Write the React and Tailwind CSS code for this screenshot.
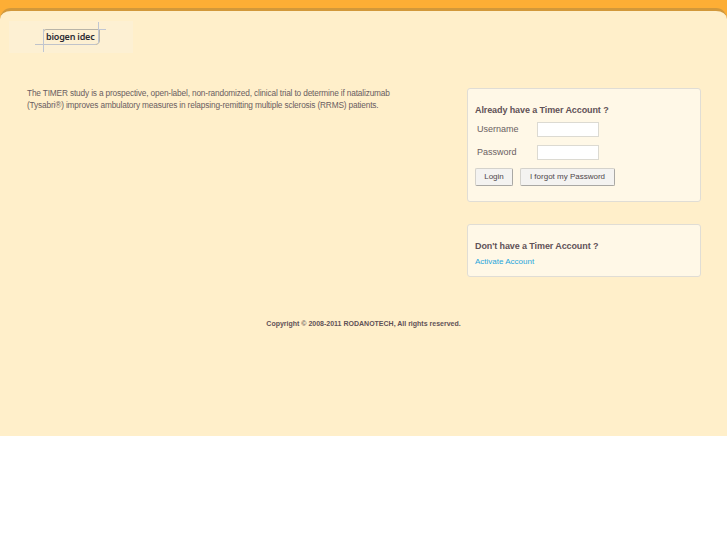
export default function App() {
  return (
    <div className="bg-white h-[545px] font-['Liberation_Sans',Arial,sans-serif] text-[#5f5257]">
      <div className="h-[436px] bg-[#fdae35] flex flex-col">
        <div className="h-[8px] shrink-0" />
        <div className="flex-1 rounded-t-[11px] bg-[#ffefca] border-t-[3px] border-[#d2983a] flex flex-col">
          <div className="ml-[9px] mt-[10px] w-[124px] h-[32px] bg-[#fdf0d3] relative shrink-0">
            <svg className="absolute left-0 top-0" width="124" height="32" viewBox="0 0 124 32" fill="none">
              <path d="M34.5 23.5 V11 Q34.5 8.5 37 8.5 H90.5 V19 Q90.5 23.5 86 23.5" stroke="#b8b4a8" strokeWidth="1" />
              <path d="M26 23.5 H87" stroke="#c0c3ca" strokeWidth="1" />
              <path d="M34.5 8 V31" stroke="#c0c6d2" strokeWidth="1" />
              <path d="M89 8.5 H97" stroke="#c0c6d2" strokeWidth="1" />
              <path d="M89.5 1 V22" stroke="#c0c6d2" strokeWidth="1" />
            </svg>
            <span className="absolute left-[37px] top-[9px] text-[9px] tracking-[-0.2px] leading-[13px] font-['Noto_Sans',sans-serif] font-semibold text-[#2b2b33] whitespace-nowrap">biogen idec</span>
          </div>
          <div className="flex justify-between mt-[35px] pl-[27px] pr-[26px] shrink-0">
            <p className="w-[372px] -mt-[1px] text-[8.3px] tracking-[-0.16px] leading-[12px] text-[#6a5d61]">
              The TIMER study is a prospective, open-label, non-randomized, clinical trial to determine if natalizumab (Tysabri®) improves ambulatory measures in relapsing-remitting multiple sclerosis (RRMS) patients.
            </p>
            <div className="w-[234px] flex flex-col gap-[22px]">
              <div className="h-[114px] rounded-[3px] border border-[#e0ddd5] bg-[#fff8e7] pl-[7px] pt-[15px]">
                <h2 className="text-[9px] leading-[12px] font-bold tracking-[-0.1px]">Already have a Timer Account ?</h2>
                <div className="flex items-center mt-[5px] h-[16px]">
                  <label className="w-[62px] pl-[2px] pt-[1px] text-[9px] text-[#6a5f62]">Username</label>
                  <input className="w-[62px] h-[15px] bg-white border border-[#dcdad2]" />
                </div>
                <div className="flex items-center mt-[7px] h-[16px]">
                  <label className="w-[62px] pl-[2px] pt-[1px] text-[9px] text-[#6a5f62]">Password</label>
                  <input className="w-[62px] h-[15px] bg-white border border-[#dcdad2]" />
                </div>
                <div className="flex items-center gap-[7px] mt-[8px]">
                  <button className="w-[38px] h-[18px] rounded-[2px] bg-[#f4f3f1] border border-[#d4d2cc] border-r-[#a9a8a4] border-b-[#a9a8a4] text-[8px] leading-none text-[#4f474b]">Login</button>
                  <button className="w-[95px] h-[18px] rounded-[2px] bg-[#f4f3f1] border border-[#d4d2cc] border-r-[#a9a8a4] border-b-[#a9a8a4] text-[8px] leading-none text-[#4f474b]">I forgot my Password</button>
                </div>
              </div>
              <div className="h-[53px] rounded-[3px] border border-[#e0ddd5] bg-[#fff8e7] pl-[7px] pt-[15px]">
                <h2 className="text-[9px] leading-[12px] font-bold tracking-[-0.1px]">Don't have a Timer Account ?</h2>
                <a className="block mt-[4px] text-[8px] leading-[12px] text-[#1fa6dc]">Activate Account</a>
              </div>
            </div>
          </div>
          <p className="mt-[42px] text-center text-[7px] leading-[10px] font-bold">Copyright © 2008-2011 RODANOTECH, All rights reserved.</p>
        </div>
      </div>
    </div>
  );
}
